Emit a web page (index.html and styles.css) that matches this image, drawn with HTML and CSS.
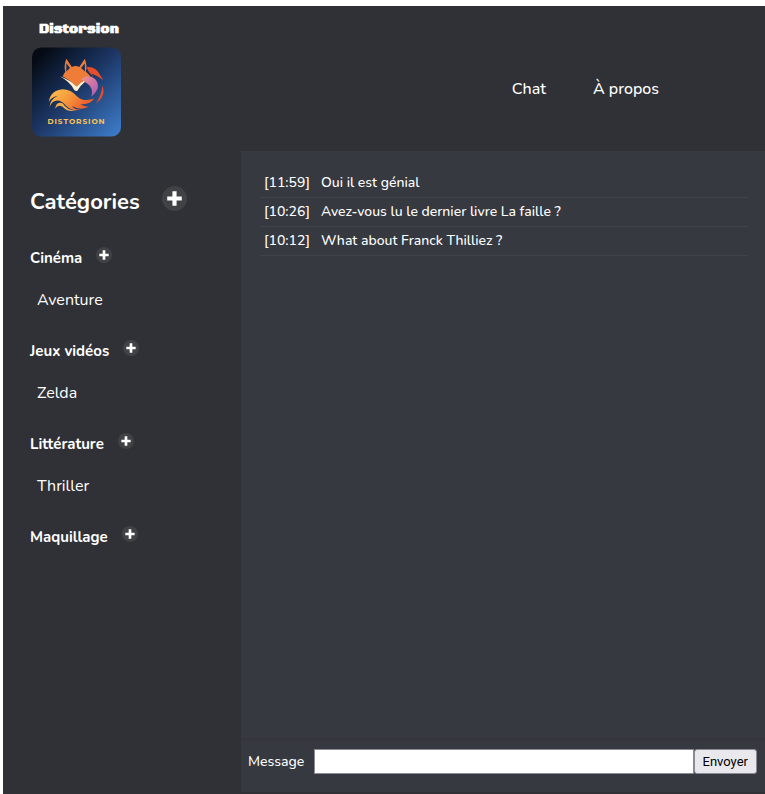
FILE: index.html
```html
<!DOCTYPE html>
<html lang="fr">
<head>
<meta charset="utf-8">
<meta name="viewport" content="width=device-width, initial-scale=1">
<title>Distorsion</title>
<link rel="stylesheet" href="styles.css">
</head>
<body>
<svg class="defs" aria-hidden="true">
  <symbol id="plus" viewBox="0 0 24 24">
    <circle cx="12" cy="12" r="12" fill="#414246"/>
    <path d="M10 5h4v5h5v4h-5v5h-4v-5H5v-4h5z" fill="#fff"/>
  </symbol>
</svg>
<div class="app">
  <header class="header">
    <div class="brand">
      <h1 class="brand-name">Distorsion</h1>
      <svg class="logo" viewBox="0 0 96 96" role="img" aria-label="Distorsion">
        <defs>
          <linearGradient id="night" x1="0" y1="0" x2="1" y2="1">
            <stop offset="0.08" stop-color="#050a14"/>
            <stop offset="0.5" stop-color="#1d3766"/>
            <stop offset="1" stop-color="#3e80cf"/>
          </linearGradient>
          <linearGradient id="tail" x1="0" y1="0" x2="1" y2="0.4">
            <stop offset="0" stop-color="#fcc452"/>
            <stop offset="0.5" stop-color="#f79a3c"/>
            <stop offset="1" stop-color="#ec5a2c"/>
          </linearGradient>
          <linearGradient id="swirl" x1="0" y1="0" x2="1" y2="1">
            <stop offset="0" stop-color="#f19a80"/>
            <stop offset="0.5" stop-color="#cf73ab"/>
            <stop offset="1" stop-color="#a65ab4"/>
          </linearGradient>
        </defs>
        <rect width="96" height="96" rx="10" fill="url(#night)"/>
        <path d="M37 12L43 21Q47 19 51 21L57 12Q60 21 58 26L63 31Q54 36 48 42Q42 36 33 31L36 26Q34 20 37 12z" fill="#ef7d37"/>
        <path d="M37 17L41 22L37 26zM57 17L57 26L53 22z" fill="#172d55"/>
        <path d="M30 31Q41 35 48 42Q55 35 66 31Q55 37 50 45Q48 49 45 45Q41 37 30 31z" fill="#fff0cf"/>
        <path d="M59 21Q69 20 73 29L77 35Q70 30 64 28L66 31Q60 26 59 21z" fill="#e94e2b"/>
        <path d="M53 34Q61 28 68 34Q76 43 64 53Q67 44 60 39Q56 37 53 34z" fill="url(#swirl)"/>
        <path d="M76 41Q80 53 69 60Q75 52 76 41z" fill="#e94e2b"/>
        <path d="M18 59Q20 46 33 45Q42 45 49 53Q56 59 67 55Q63 62 52 61Q58 65 62 63Q54 69 43 63Q47 68 54 67Q43 70 36 62Q30 55 24 58Q20 60 19 65Q19 56 28 52Q20 54 18 59z" fill="url(#tail)"/>
        <path d="M25 66Q26 58 33 60Q38 68 48 68Q38 70 33 64Q28 61 25 66z" fill="#f6b04a"/>
        <text class="logo-text" x="48" y="82" text-anchor="middle">DISTORSION</text>
      </svg>
    </div>
    <nav class="nav">
      <a href="#chat">Chat</a>
      <a href="#about">À propos</a>
    </nav>
  </header>
  <div class="content">
    <aside class="sidebar">
      <div class="heading">
        <h2>Catégories</h2>
        <button class="add add-large" type="button" aria-label="Ajouter une catégorie"><svg><use href="#plus"/></svg></button>
      </div>
      <section class="category">
        <div class="category-title"><h3>Cinéma</h3><button class="add" type="button" aria-label="Ajouter un salon à Cinéma"><svg><use href="#plus"/></svg></button></div>
        <a class="room" href="#aventure">Aventure</a>
      </section>
      <section class="category">
        <div class="category-title"><h3>Jeux vidéos</h3><button class="add" type="button" aria-label="Ajouter un salon à Jeux vidéos"><svg><use href="#plus"/></svg></button></div>
        <a class="room" href="#zelda">Zelda</a>
      </section>
      <section class="category">
        <div class="category-title"><h3>Littérature</h3><button class="add" type="button" aria-label="Ajouter un salon à Littérature"><svg><use href="#plus"/></svg></button></div>
        <a class="room" href="#thriller">Thriller</a>
      </section>
      <section class="category">
        <div class="category-title"><h3>Maquillage</h3><button class="add" type="button" aria-label="Ajouter un salon à Maquillage"><svg><use href="#plus"/></svg></button></div>
      </section>
    </aside>
    <main class="chat">
      <ul class="messages">
        <li><time>[11:59]</time><span>Oui il est génial</span></li>
        <li><time>[10:26]</time><span>Avez-vous lu le dernier livre La faille ?</span></li>
        <li><time>[10:12]</time><span>What about Franck Thilliez ?</span></li>
      </ul>
      <form class="composer">
        <label for="message">Message</label>
        <input id="message" type="text">
        <button type="submit">Envoyer</button>
      </form>
    </main>
  </div>
</div>
</body>
</html>
```
FILE: styles.css
```css
* {
  box-sizing: border-box;
}

body {
  margin: 0;
  padding: 6px 0 0 3px;
  background: #fff;
  color: #fff;
  font-family: Nunito, Lato, "Open Sans", sans-serif;
  font-size: 16px;
}

h1, h2, h3, ul {
  margin: 0;
  padding: 0;
}

a {
  color: inherit;
  text-decoration: none;
}

.defs {
  display: none;
}

.app {
  display: flex;
  flex-direction: column;
  min-height: calc(100vh - 6px);
  padding-bottom: 2px;
  background: #303136;
}

.header {
  display: flex;
  justify-content: space-between;
  padding: 12px 106px 14px 29px;
}

.brand-name {
  padding-left: 7px;
  font-family: "Black Ops One", Inter, sans-serif;
  font-size: 14px;
  font-weight: 900;
  line-height: 22px;
}

.logo {
  display: block;
  width: 89px;
  height: 90px;
  margin-top: 7px;
}

.logo-text {
  fill: #fcc452;
  font-family: Montserrat, Inter, sans-serif;
  font-size: 8px;
  font-weight: 700;
  letter-spacing: 1px;
}

.nav {
  display: flex;
  align-items: center;
  gap: 47px;
  padding-top: 22px;
  font-size: 16px;
  font-weight: 500;
}

.content {
  display: flex;
  flex: 1;
}

.sidebar {
  flex: 0 0 238px;
  padding: 35px 27px;
}

.heading {
  display: flex;
  gap: 22px;
  margin-bottom: 27px;
}

h2 {
  font-size: 22px;
  font-weight: 700;
  line-height: 32px;
}

h3 {
  font-size: 15px;
  font-weight: 700;
  line-height: 22px;
}

.category {
  min-height: 93px;
  padding-top: 2px;
}

.category-title {
  display: flex;
  gap: 14px;
  margin-bottom: 19px;
}

.room {
  display: block;
  padding-left: 7px;
  font-size: 16px;
  line-height: 24px;
}

.add {
  width: 16px;
  height: 16px;
  padding: 0;
  border: 0;
  border-radius: 50%;
  background: none;
  cursor: pointer;
}

.add svg {
  display: block;
  width: 100%;
  height: 100%;
}

.add-large {
  width: 25px;
  height: 25px;
}

.chat {
  display: flex;
  flex: 1;
  flex-direction: column;
  min-width: 0;
  background: #363940;
}

.messages {
  flex: 1;
  padding: 18px 17px 0 19px;
  list-style: none;
}

.messages li {
  display: flex;
  gap: 11px;
  padding: 4px;
  border-bottom: 1px solid #424347;
  font-size: 14px;
  font-weight: 500;
  line-height: 20px;
}

.messages time {
  flex: 0 0 46px;
}

.composer {
  display: flex;
  align-items: center;
  padding: 8px 8px 18px 7px;
  border-top: 3px solid #34363b;
  font-size: 14px;
  font-weight: 500;
}

.composer label {
  margin-right: 10px;
}

.composer input {
  flex: 1;
  min-width: 0;
  height: 25px;
  border: 1px solid #8b8a99;
  background: #fff;
}

.composer button {
  height: 25px;
  padding: 0 8px;
  border: 1px solid #8b8a99;
  border-radius: 3px;
  background: #e9e9ed;
  color: #000;
  font-family: Roboto, sans-serif;
  font-size: 13px;
}
```
